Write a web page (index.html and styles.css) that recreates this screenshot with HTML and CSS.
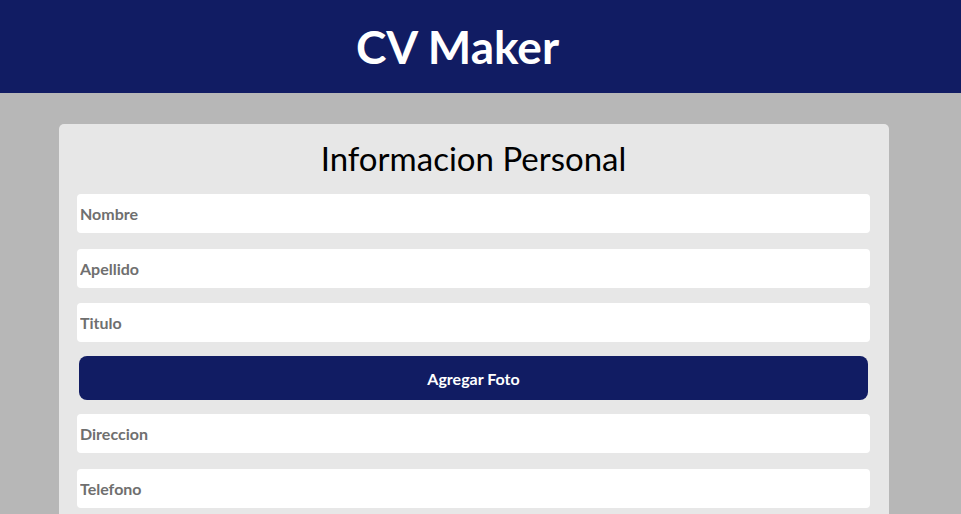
FILE: index.html
```html
<!DOCTYPE html>
<html lang="es">
<head>
<meta charset="utf-8">
<title>CV Maker</title>
<link rel="stylesheet" href="styles.css">
</head>
<body>
<header class="topbar">
  <h1 class="brand">CV Maker</h1>
</header>
<main class="page">
  <section class="card">
    <h2 class="card-title">Informacion Personal</h2>
    <form class="form">
      <input class="field" type="text" placeholder="Nombre">
      <input class="field" type="text" placeholder="Apellido">
      <input class="field" type="text" placeholder="Titulo">
      <button class="btn" type="button">Agregar Foto</button>
      <input class="field" type="text" placeholder="Direccion">
      <input class="field" type="text" placeholder="Telefono">
    </form>
  </section>
</main>
</body>
</html>
```
FILE: styles.css
```css
* { box-sizing: border-box; }
html, body {
  margin: 0;
  padding: 0;
}
body {
  background: #b7b7b7;
  font-family: Lato, "Open Sans", sans-serif;
  height: 514px;
  overflow: hidden;
}
.topbar {
  background: #111c63;
  height: 93px;
  display: flex;
  align-items: center;
  justify-content: center;
  padding-right: 46px;
}
.brand {
  margin: 0;
  color: #ffffff;
  font-size: 46px;
  font-weight: 700;
  line-height: 1;
}
.page {
  padding-top: 31px;
}
.card {
  width: 830px;
  margin-left: 59px;
  background: #e7e7e7;
  border-radius: 5px;
  padding: 14px 19px 20px 18px;
}
.card-title {
  margin: 0 0 16px;
  text-align: center;
  font-size: 33px;
  font-weight: 400;
  color: #000;
  line-height: 40px;
}
.form {
  display: flex;
  flex-direction: column;
  gap: 15.5px;
}
.field {
  height: 39px;
  border: none;
  border-radius: 4px;
  background: #fff;
  padding: 0 3px;
  font-family: inherit;
  font-size: 16px;
  font-weight: 700;
  outline: none;
}
.field::placeholder {
  color: #6f6f6f;
}
.btn {
  height: 44px;
  margin: -1.5px 2px -1.5px 2px;
  border: none;
  border-radius: 8px;
  background: #111c63;
  color: #fff;
  font-family: inherit;
  font-size: 16px;
  font-weight: 700;
}
```
